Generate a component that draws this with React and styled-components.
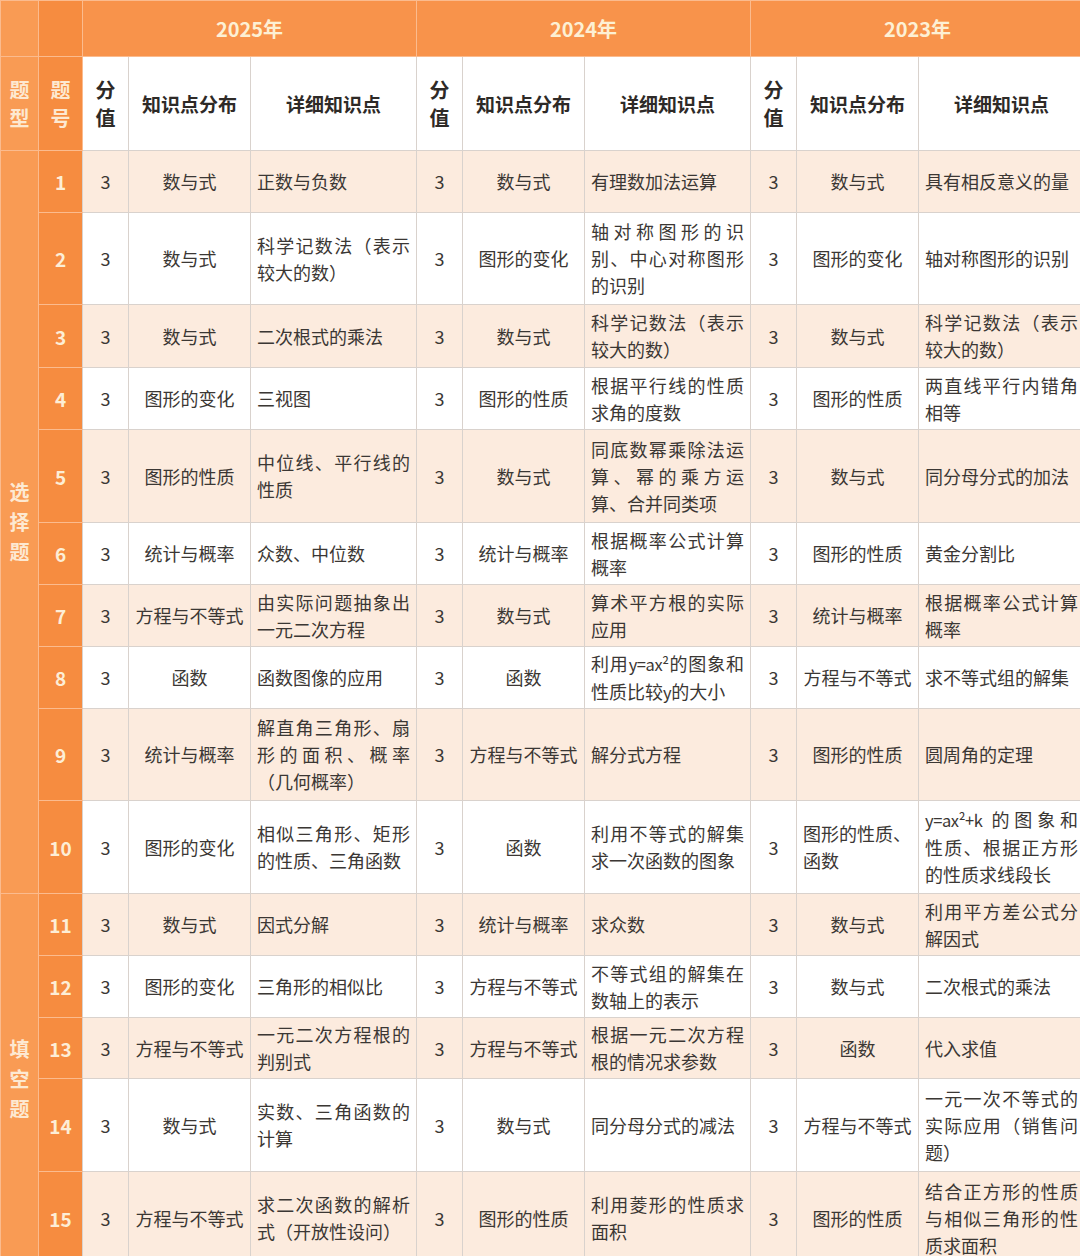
import styled, { createGlobalStyle } from 'styled-components'

const GlobalStyle = createGlobalStyle`
    html, body {
        margin: 0;
        padding: 0;
        background: #ffffff;
        overflow-x: hidden;
    }
    body {
        font-family: "Noto Sans CJK SC", "Noto Sans", sans-serif;
        color: #3b3734;
    }
`

const years = ['2025年', '2024年', '2023年']

// "|" marks a line break as in the printed table, h is the printed row height
const rows = [
    { n: 1, h: 62, cells: [['3', '数与式', '正数与负数'], ['3', '数与式', '有理数加法运算'], ['3', '数与式', '具有相反意义的量']] },
    { n: 2, h: 92, cells: [['3', '数与式', '科学记数法（表示|较大的数）'], ['3', '图形的变化', '轴对称图形的识|别、中心对称图形|的识别'], ['3', '图形的变化', '轴对称图形的识别']] },
    { n: 3, h: 63, cells: [['3', '数与式', '二次根式的乘法'], ['3', '数与式', '科学记数法（表示|较大的数）'], ['3', '数与式', '科学记数法（表示|较大的数）']] },
    { n: 4, h: 62, cells: [['3', '图形的变化', '三视图'], ['3', '图形的性质', '根据平行线的性质|求角的度数'], ['3', '图形的性质', '两直线平行内错角|相等']] },
    { n: 5, h: 93, cells: [['3', '图形的性质', '中位线、平行线的|性质'], ['3', '数与式', '同底数幂乘除法运|算、幂的乘方运|算、合并同类项'], ['3', '数与式', '同分母分式的加法']] },
    { n: 6, h: 62, cells: [['3', '统计与概率', '众数、中位数'], ['3', '统计与概率', '根据概率公式计算|概率'], ['3', '图形的性质', '黄金分割比']] },
    { n: 7, h: 62, cells: [['3', '方程与不等式', '由实际问题抽象出|一元二次方程'], ['3', '数与式', '算术平方根的实际|应用'], ['3', '统计与概率', '根据概率公式计算|概率']] },
    { n: 8, h: 62, cells: [['3', '函数', '函数图像的应用'], ['3', '函数', '利用y=ax²的图象和|性质比较y的大小'], ['3', '方程与不等式', '求不等式组的解集']] },
    { n: 9, h: 92, cells: [['3', '统计与概率', '解直角三角形、扇|形的面积、概率|（几何概率）'], ['3', '方程与不等式', '解分式方程'], ['3', '图形的性质', '圆周角的定理']] },
    { n: 10, h: 93, cells: [['3', '图形的变化', '相似三角形、矩形|的性质、三角函数'], ['3', '函数', '利用不等式的解集|求一次函数的图象'], ['3', '图形的性质、|函数', 'y=ax²+k 的图象和|性质、根据正方形|的性质求线段长']] },
    { n: 11, h: 62, cells: [['3', '数与式', '因式分解'], ['3', '统计与概率', '求众数'], ['3', '数与式', '利用平方差公式分|解因式']] },
    { n: 12, h: 62, cells: [['3', '图形的变化', '三角形的相似比'], ['3', '方程与不等式', '不等式组的解集在|数轴上的表示'], ['3', '数与式', '二次根式的乘法']] },
    { n: 13, h: 61, cells: [['3', '方程与不等式', '一元二次方程根的|判别式'], ['3', '方程与不等式', '根据一元二次方程|根的情况求参数'], ['3', '函数', '代入求值']] },
    { n: 14, h: 93, cells: [['3', '数与式', '实数、三角函数的|计算'], ['3', '数与式', '同分母分式的减法'], ['3', '方程与不等式', '一元一次不等式的|实际应用（销售问|题）']] },
    { n: 15, h: 93, cells: [['3', '方程与不等式', '求二次函数的解析|式（开放性设问）'], ['3', '图形的性质', '利用菱形的性质求|面积'], ['3', '图形的性质', '结合正方形的性质|与相似三角形的性|质求面积']] },
]

const colWidths = [38, 44, 46, 122, 166, 46, 122, 166, 46, 122, 166]

function renderLine(text) {
    return text.split(/([A-Za-z0-9=²+]+)/).map((part, i) =>
        i % 2 === 1 ? <Formula key={i}>{part}</Formula> : part
    )
}

function Lines({ text }) {
    const lines = text.split('|')
    if (lines.length === 1) return renderLine(text)
    return lines.map((l, i) => (
        <Line key={i} $last={i === lines.length - 1}>{renderLine(l)}</Line>
    ))
}

export default function App() {
    return (
        <>
            <GlobalStyle />
            <Table>
                <colgroup>
                    {colWidths.map((w, i) => <col key={i} style={{ width: w }} />)}
                </colgroup>
                <thead>
                    <YearRow>
                        <SideHead $light />
                        <SideHead />
                        {years.map(y => <YearCell key={y} colSpan={3}>{y}</YearCell>)}
                    </YearRow>
                    <SubRow>
                        <SideHead $light><Stack>题型</Stack></SideHead>
                        <SideHead><Stack>题号</Stack></SideHead>
                        {years.map(y => [
                            <SubCell key={y + 'a'}><Stack $big>分值</Stack></SubCell>,
                            <SubCell key={y + 'b'}>知识点分布</SubCell>,
                            <SubCell key={y + 'c'}>详细知识点</SubCell>,
                        ])}
                    </SubRow>
                </thead>
                <tbody>
                    {rows.map((r, i) => (
                        <BodyRow key={r.n} $shade={i % 2 === 0} $h={r.h}>
                            {r.n === 1 && <TypeCell rowSpan={10}><Stack $gap>选择题</Stack></TypeCell>}
                            {r.n === 11 && <TypeCell rowSpan={5}><Stack $gap>填空题</Stack></TypeCell>}
                            <NumCell>{r.n}</NumCell>
                            {r.cells.map((c, j) => {
                                const catLines = c[1].includes('|')
                                return [
                                    <ScoreCell key={j + 's'}>{c[0]}</ScoreCell>,
                                    <CatCell key={j + 'c'} $left={catLines}>
                                        {catLines ? c[1].split('|').map((l, k) => <Line key={k} $last>{l}</Line>) : c[1]}
                                    </CatCell>,
                                    <DetailCell key={j + 'd'}><Lines text={c[2]} /></DetailCell>,
                                ]
                            })}
                        </BodyRow>
                    ))}
                </tbody>
            </Table>
        </>
    )
}

const Table = styled.table`
    width: 1084px;
    table-layout: fixed;
    border-collapse: collapse;
    font-size: 18px;
    line-height: 27px;
    td, th {
        border: 1px solid #d9d2cd;
        padding: 2px 6px;
    }
`

const YearRow = styled.tr`
    height: 56px;
`

const SubRow = styled.tr`
    height: 94px;
`

const SideHead = styled.th`
    background: ${p => p.$light ? '#f99b54' : '#f68c40'};
    color: #fde9d2;
    font-size: 20px;
    font-weight: 700;
    text-align: center;
    && {
        border-color: #fbbb8e;
        padding: 0;
    }
`

const YearCell = styled.th`
    background: #f8934b;
    color: #fdf0d4;
    font-size: 20px;
    font-weight: 700;
    text-align: center;
    && {
        border-color: #fbbb8e;
    }
`

const SubCell = styled.th`
    background: #ffffff;
    color: #2e2a27;
    font-size: 19px;
    font-weight: 700;
    text-align: center;
    && {
        padding: 2px;
    }
`

const Stack = styled.span`
    display: inline-block;
    width: 1em;
    font-size: ${p => p.$big ? '20px' : 'inherit'};
    line-height: ${p => p.$gap ? '30px' : '28px'};
    word-break: break-all;
`

const BodyRow = styled.tr`
    height: ${p => p.$h}px;
    background: ${p => p.$shade ? '#fcebde' : '#ffffff'};
`

const TypeCell = styled.td`
    background: #f99b54;
    color: #fde9d2;
    font-size: 20px;
    font-weight: 700;
    text-align: center;
    && {
        padding: 0;
        border-color: #fbbb8e;
    }
`

const NumCell = styled.td`
    background: #f68c40;
    color: #fdeed6;
    font-size: 19px;
    font-weight: 700;
    text-align: center;
    && {
        padding: 0;
        border-color: #fbbb8e;
        border-right-color: #d9d2cd;
    }
`

const ScoreCell = styled.td`
    text-align: center;
    && {
        padding: 0;
    }
`

const CatCell = styled.td`
    text-align: ${p => p.$left ? 'left' : 'center'};
    && {
        padding: 2px ${p => p.$left ? '6px' : '2px'};
    }
`

const DetailCell = styled.td`
    text-align: left;
`

const Line = styled.span`
    display: block;
    white-space: nowrap;
    text-align: justify;
    text-align-last: ${p => p.$last ? 'left' : 'justify'};
`

const Formula = styled.span`
    font-size: 16.5px;
    letter-spacing: -0.4px;
`
